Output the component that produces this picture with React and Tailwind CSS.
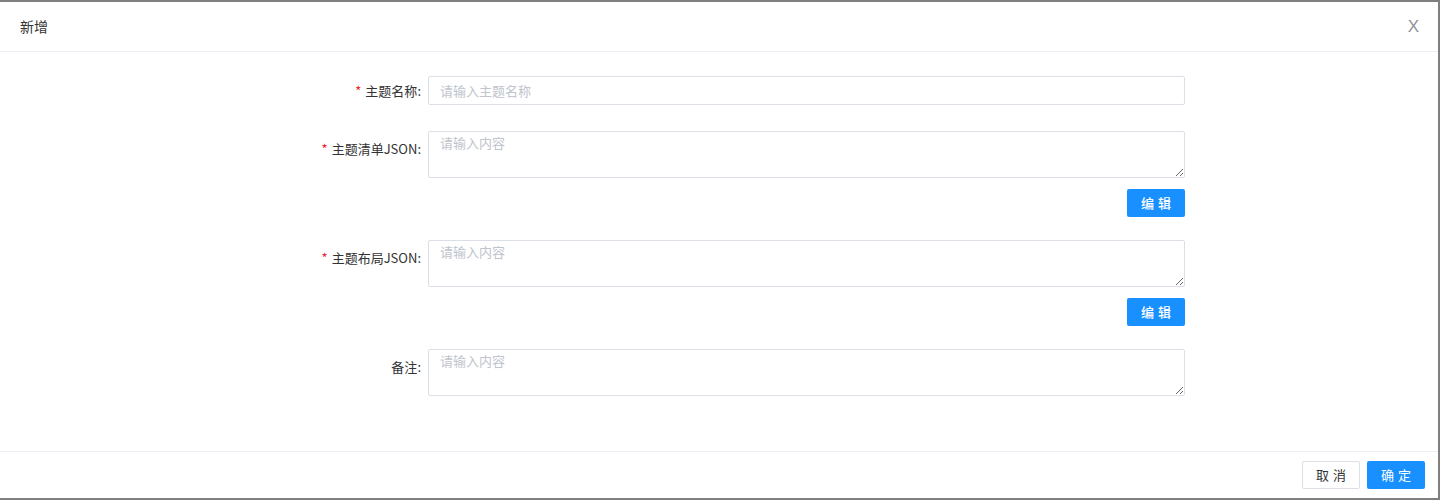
import React from "react";

const font = { fontFamily: '"Noto Sans CJK SC", "Noto Sans", sans-serif' };

function Label({ text, required, h }) {
  return (
    <div className={`w-[121px] shrink-0 flex items-center justify-end pr-[7px] text-[13px] text-[#333] ${h}`}>
      {required && <span className="text-[#f5222d] mr-[4px] text-[13px]">*</span>}
      <span>{text}:</span>
    </div>
  );
}

function Area({ label, required }) {
  return (
    <div className="flex">
      <Label text={label} required={required} h="h-[35px]" />
      <textarea
        placeholder="请输入内容"
        className="w-[757px] h-[47px] border border-[#dcdfe6] rounded-[2px] px-[11px] py-[1px] text-[13px] leading-[20px] text-[#333] placeholder:text-[#c0c4cc] outline-none"
        style={font}
      />
    </div>
  );
}

function EditBtn() {
  return (
    <div className="flex justify-end w-[878px] mt-[11px]">
      <button className="w-[58px] h-[28px] bg-[#1890ff] text-white text-[13px] font-medium rounded-[2px] tracking-[4px] pl-[4px]">
        编辑
      </button>
    </div>
  );
}

export default function App() {
  return (
    <div className="w-[1440px] h-[500px] bg-[#7f7f7f] pt-[2px] pr-[2px] pb-[2px]" style={font}>
      <div className="bg-white h-full flex flex-col">
        <div className="h-[50px] shrink-0 border-b border-[#ebeef5] flex items-center justify-between pl-5 pr-[19px]">
          <span className="text-[14px] text-[#333]">新增</span>
          <span className="text-[17px] text-[#909399] font-light" style={{ fontFamily: '"Liberation Sans", sans-serif' }}>X</span>
        </div>
        <div className="flex-1 pt-[24px] pl-[307px]">
          <div className="flex">
            <Label text="主题名称" required h="h-[29px]" />
            <input
              placeholder="请输入主题名称"
              className="w-[757px] h-[29px] border border-[#dcdfe6] rounded-[2px] px-[11px] text-[13px] text-[#333] placeholder:text-[#c0c4cc] outline-none"
              style={font}
            />
          </div>
          <div className="mt-[26px]">
            <Area label="主题清单JSON" required />
            <EditBtn />
          </div>
          <div className="mt-[23px]">
            <Area label="主题布局JSON" required />
            <EditBtn />
          </div>
          <div className="mt-[23px]">
            <Area label="备注" />
          </div>
        </div>
        <div className="h-[47px] shrink-0 border-t border-[#ebeef5] flex items-center justify-end pr-[13px] gap-[7px]">
          <button className="w-[58px] h-[28px] bg-white border border-[#dcdfe6] text-[#333] text-[13px] rounded-[2px] tracking-[4px] pl-[4px]">
            取消
          </button>
          <button className="w-[58px] h-[28px] bg-[#1890ff] text-white text-[13px] rounded-[2px] tracking-[4px] pl-[4px]">
            确定
          </button>
        </div>
      </div>
    </div>
  );
}
